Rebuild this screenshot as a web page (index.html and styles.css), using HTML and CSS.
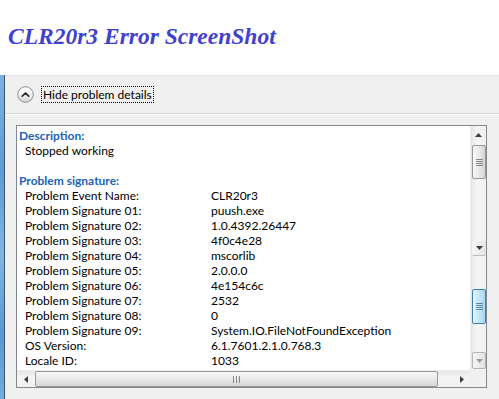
FILE: index.html
```html
<!DOCTYPE html>
<html>
<head>
<meta charset="utf-8">
<link rel="stylesheet" href="styles.css">
</head>
<body>
<h1 class="title">CLR20r3 Error ScreenShot</h1>
<div class="window">
  <div class="frame"></div>
  <div class="client">
    <div class="toolbar">
      <span class="circle-btn">
        <svg width="17" height="17" viewBox="0 0 17 17">
          <defs>
            <linearGradient id="cg" x1="0" y1="0" x2="0" y2="1">
              <stop offset="0" stop-color="#ffffff"/>
              <stop offset="0.5" stop-color="#f0f0f0"/>
              <stop offset="1" stop-color="#d4d4d4"/>
            </linearGradient>
          </defs>
          <circle cx="8.5" cy="8.5" r="7.8" fill="url(#cg)" stroke="#8e8e8e" stroke-width="1"/>
          <path d="M5.3 10.2 L8.5 7 L11.7 10.2" fill="none" stroke="#2a2a2a" stroke-width="1.7" stroke-linecap="round" stroke-linejoin="round"/>
        </svg>
      </span>
      <span class="toggle-label">Hide problem details</span>
    </div>
    <div class="details">
      <div class="listbox">
        <div class="content">
          <div class="sect-title">Description:</div>
          <div class="line">Stopped working</div>
          <div class="blank"></div>
          <div class="sect-title">Problem signature:</div>
          <div class="kv">
            <span>Problem Event Name:</span><span>CLR20r3</span>
            <span>Problem Signature 01:</span><span>puush.exe</span>
            <span>Problem Signature 02:</span><span>1.0.4392.26447</span>
            <span>Problem Signature 03:</span><span>4f0c4e28</span>
            <span>Problem Signature 04:</span><span>mscorlib</span>
            <span>Problem Signature 05:</span><span>2.0.0.0</span>
            <span>Problem Signature 06:</span><span>4e154c6c</span>
            <span>Problem Signature 07:</span><span>2532</span>
            <span>Problem Signature 08:</span><span>0</span>
            <span>Problem Signature 09:</span><span>System.IO.FileNotFoundException</span>
            <span>OS Version:</span><span>6.1.7601.2.1.0.768.3</span>
            <span>Locale ID:</span><span>1033</span>
          </div>
        </div>
        <div class="vscroll">
          <div class="sb-btn up"><svg width="7" height="4" viewBox="0 0 7 4"><path d="M0 4 L3.5 0 L7 4Z" fill="#3c3c3c"/></svg></div>
          <div class="sp2"></div>
          <div class="thumb-v"><span class="grip-v"></span></div>
          <div class="track t1"></div>
          <div class="fake-down"><svg width="7" height="4" viewBox="0 0 7 4"><path d="M0 0 L7 0 L3.5 4Z" fill="#3c3c3c"/></svg></div>
          <div class="track t2"></div>
          <div class="thumb-v hot"><span class="grip-v"></span></div>
          <div class="track t3"></div>
          <div class="sb-btn down"><svg width="7" height="4" viewBox="0 0 7 4"><path d="M0 0 L7 0 L3.5 4Z" fill="#9a9a9a"/></svg></div>
        </div>
        <div class="hscroll">
          <div class="hb left"><svg width="4" height="7" viewBox="0 0 4 7"><path d="M4 0 L4 7 L0 3.5Z" fill="#3c3c3c"/></svg></div>
          <div class="thumb-h"><span class="grip-h"></span></div>
          <div class="htrack"></div>
          <div class="hb right"><svg width="4" height="7" viewBox="0 0 4 7"><path d="M0 0 L4 3.5 L0 7Z" fill="#3c3c3c"/></svg></div>
        </div>
        <div class="corner"></div>
      </div>
    </div>
  </div>
</div>
</body>
</html>
```

FILE: styles.css
```css
* { box-sizing: border-box; }
html, body { margin: 0; padding: 0; background: #fff; }
body {
  width: 499px;
  height: 399px;
  overflow: hidden;
  font-family: Lato, "Open Sans", sans-serif;
  font-size: 12px;
  color: #000;
}
.title {
  margin: 0;
  height: 75px;
  padding: 22px 0 0 8px;
  font: bold italic 23.5px/28px "Liberation Serif", serif;
  color: #4141cf;
  white-space: nowrap;
}
.window {
  display: flex;
  height: 324px;
}
.frame {
  width: 5px;
  flex: none;
  background: linear-gradient(to bottom, #7cb2e0 0%, #5f9ad2 30%, #80b6e2 55%, #5b97d0 80%, #74acdc 100%);
  border-right: 1px solid #3c5574;
}
.client {
  flex: 1;
  display: flex;
  flex-direction: column;
  background: #f0f0f0;
  border-top: 1px solid #e3e3e3;
}
.toolbar {
  height: 38px;
  flex: none;
  display: flex;
  align-items: center;
  padding-left: 12px;
  border-bottom: 1px solid #d7d7d7;
  box-shadow: 0 1px 0 #ffffff;
}
.circle-btn {
  width: 17px;
  height: 17px;
  display: block;
}
.circle-btn svg { display: block; }
.toggle-label {
  margin-left: 7px;
  height: 17px;
  line-height: 15px;
  padding: 0 1px;
  border: 1px dotted #000;
  white-space: nowrap;
}
.details {
  flex: 1;
  padding: 11px 12px 0 11px;
}
.listbox {
  height: 263px;
  border: 1px solid #828790;
  background: #fff;
  display: grid;
  grid-template-columns: 1fr 16px;
  grid-template-rows: 1fr 17px;
}
.content {
  padding: 2px 0 0 2px;
  overflow: hidden;
  line-height: 15px;
  white-space: nowrap;
}
.sect-title {
  color: #2063b4;
  font-weight: 700;
}
.line { padding-left: 6px; }
.blank { height: 15px; }
.kv {
  display: grid;
  grid-template-columns: 186px auto;
  padding-left: 6px;
}

/* vertical scrollbar */
.vscroll {
  display: flex;
  flex-direction: column;
  background: linear-gradient(to right, #e6e6e6, #f5f5f5 40%, #f0f0f0);
  border-left: 1px solid #ececec;
}
.sb-btn {
  height: 17px;
  flex: none;
  display: flex;
  align-items: center;
  justify-content: center;
}
.sb-btn.down {
  border: 1px solid #b4b4b4;
  border-radius: 2px;
  background: linear-gradient(to right, #f6f6f6, #e2e2e2);
  margin: 0 0 1px 1px;
}
.sb-btn svg, .fake-down svg, .hb svg { display: block; }
.sp2 { height: 2px; flex: none; }
.thumb-v {
  height: 34px;
  flex: none;
  margin-left: 1px;
  border: 1px solid #979797;
  border-radius: 2px;
  background: linear-gradient(to right, #f7f7f7, #e9e9e9 50%, #d6d6d6);
  display: flex;
  align-items: center;
  justify-content: center;
}
.thumb-v.hot {
  height: 35px;
  border-color: #3c7fb1;
  background: linear-gradient(to right, #e9f6fd, #c4e6f8 50%, #a7d9f5);
}
.grip-v {
  width: 7px;
  height: 7px;
  background: repeating-linear-gradient(to bottom, #5a5a5a 0 1px, transparent 1px 2px);
  opacity: 0.7;
}
.thumb-v.hot .grip-v {
  background: repeating-linear-gradient(to bottom, #2b5c85 0 1px, transparent 1px 2px);
}
.track { flex: none; }
.t1 { flex: 1; }
.t2 { height: 33px; }
.t3 { height: 28px; }
.fake-down {
  height: 15px;
  flex: none;
  display: flex;
  align-items: center;
  justify-content: center;
  margin-left: 1px;
  border-bottom: 1px solid #bcbcbc;
  background: linear-gradient(to right, #f6f6f6, #e4e4e4);
  border-radius: 0 0 2px 2px;
}

/* horizontal scrollbar */
.hscroll {
  display: flex;
  align-items: stretch;
  background: linear-gradient(to bottom, #e6e6e6, #f5f5f5 40%, #f0f0f0);
  border-top: 1px solid #ececec;
}
.hb {
  width: 17px;
  flex: none;
  display: flex;
  align-items: center;
  justify-content: center;
}
.thumb-h {
  width: 403px;
  flex: none;
  margin-left: 1px;
  border: 1px solid #979797;
  border-radius: 2px;
  background: linear-gradient(to bottom, #f7f7f7, #e9e9e9 50%, #d6d6d6);
  display: flex;
  align-items: center;
  justify-content: center;
}
.grip-h {
  width: 7px;
  height: 7px;
  background: repeating-linear-gradient(to right, #5a5a5a 0 1px, transparent 1px 3px);
  opacity: 0.7;
}
.htrack { flex: 1; }
.corner { background: #f0f0f0; }
```
